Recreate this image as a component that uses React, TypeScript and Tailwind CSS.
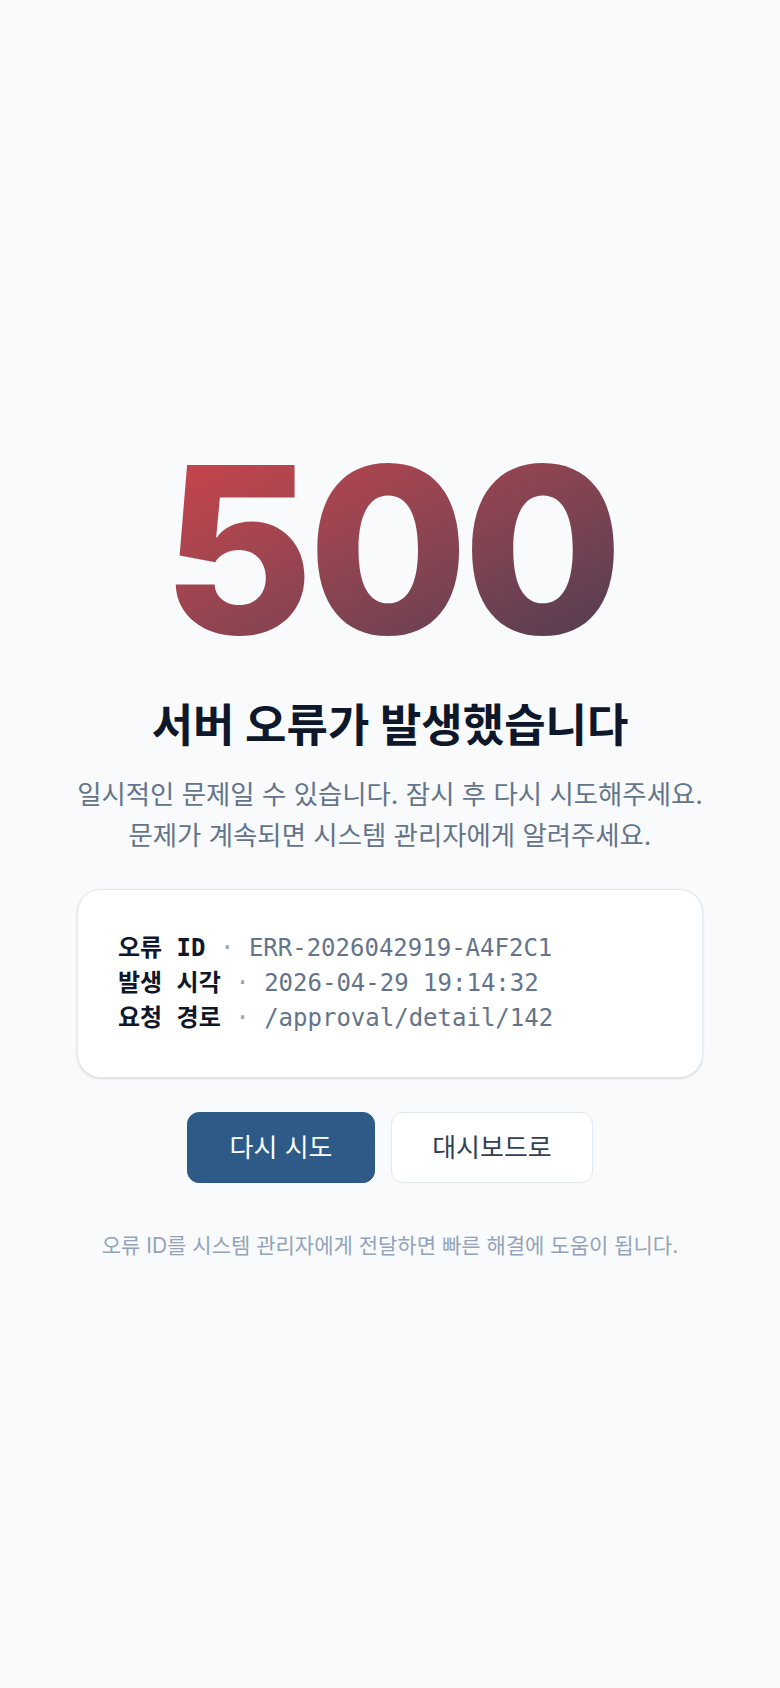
import React from "react";

export default function App() {
  return (
    <div
      className="min-h-screen w-full bg-[#f8fafc] flex flex-col items-center justify-start pt-[434px] px-[77px]"
      style={{ fontFamily: 'Inter, "Noto Sans CJK KR", sans-serif' }}
    >
      <div className="flex flex-col items-center w-full">
        <h1 className="text-[232px] leading-none font-extrabold tracking-tight bg-gradient-to-br from-[#d2434a] to-[#4a3b52] bg-clip-text text-transparent [font-family:Inter,sans-serif]">
          500
        </h1>
        <h2 className="mt-[31px] text-[45px] leading-[1.3] font-bold text-[#0f172a]">
          서버 오류가 발생했습니다
        </h2>
        <p className="mt-[18px] text-[26.4px] leading-[41px] text-[#64748b] text-center">
          일시적인 문제일 수 있습니다. 잠시 후 다시 시도해주세요.
          <br />
          문제가 계속되면 시스템 관리자에게 알려주세요.
        </p>
        <div className="mt-[33px] w-full rounded-3xl border border-[#e2e8f0] bg-white px-10 py-[41px] shadow-sm [font-family:'DejaVu_Sans_Mono','Noto_Sans_CJK_KR',monospace] text-[24px] leading-[35px]">
          <div>
            <span className="font-bold text-[#0f172a]">오류 ID</span>
            <span className="text-[#94a3b8]"> · </span>
            <span className="text-[#64748b]">ERR-2026042919-A4F2C1</span>
          </div>
          <div>
            <span className="font-bold text-[#0f172a]">발생 시각</span>
            <span className="text-[#94a3b8]"> · </span>
            <span className="text-[#64748b]">2026-04-29 19:14:32</span>
          </div>
          <div>
            <span className="font-bold text-[#0f172a]">요청 경로</span>
            <span className="text-[#94a3b8]"> · </span>
            <span className="text-[#64748b]">/approval/detail/142</span>
          </div>
        </div>
        <div className="mt-[34px] flex gap-4">
          <button className="h-[71px] w-[188px] flex items-center justify-center rounded-xl border border-[#2d5a87] bg-[#2d5a87] text-white text-[26px] font-normal">
            다시 시도
          </button>
          <button className="h-[71px] w-[202px] flex items-center justify-center rounded-xl border border-[#e2e8f0] bg-white text-[#334155] text-[26px] font-normal">
            대시보드로
          </button>
        </div>
        <p className="mt-[48px] text-[21px] leading-[30px] text-[#94a3b8]">
          오류 ID를 시스템 관리자에게 전달하면 빠른 해결에 도움이 됩니다.
        </p>
      </div>
    </div>
  );
}
